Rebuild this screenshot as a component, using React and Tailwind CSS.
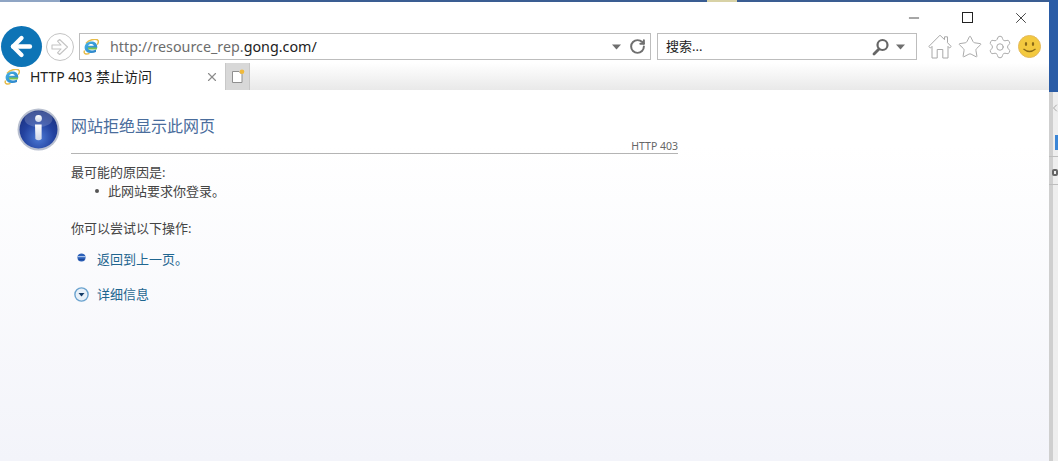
import React from "react";
import { ArrowLeft, RotateCw, Star, Settings, X, Minus, ChevronLeft } from "lucide-react";

const IeLogo = ({ size = 16, id = "ieg" }) => (
  <svg width={size} height={size} viewBox="0 0 16 16" className="shrink-0">
    <defs>
      <linearGradient id={id} x1="0" y1="0" x2="1" y2="1">
        <stop offset="0" stopColor="#45b4e6" />
        <stop offset="1" stopColor="#2b7fc6" />
      </linearGradient>
    </defs>
    <path d="M3 4.5 C6 0.5 12 -0.2 14.4 0.8 C16 1.8 15.4 4 14.2 5.6" fill="none" stroke="#e6bc4a" strokeWidth="1.5" />
    <path d="M1.6 11.5 C0 15 3.5 15.8 6.5 14.4" fill="none" stroke="#e6bc4a" strokeWidth="1.5" />
    <path d="M14.2 9 H5 C5.3 11.4 9.5 12.2 13 10.4 L13 13 C8.5 15.4 1.6 13.8 1.6 8.4 C1.6 3.6 7 1.4 10.8 2.8 C13.4 3.9 14.6 6.4 14.2 9 Z M5.2 6.8 H10.8 C10.5 4.4 5.8 4.3 5.2 6.8 Z" fill={`url(#${id})`} fillRule="evenodd" />
    <path d="M4.8 8.6 H14.2 L13.8 10.4 H5.4 Z" fill="#7cc350" />
  </svg>
);

const Caret = () => (
  <svg width="9" height="6" viewBox="0 0 9 6" className="shrink-0"><path d="M0 0.5 H9 L4.5 5.5 Z" fill="#6f6f6f" /></svg>
);

const InfoIcon = () => (
  <svg width="43" height="43" viewBox="0 0 43 43" className="shrink-0">
    <defs>
      <radialGradient id="inf" cx="0.5" cy="0.72" r="0.75">
        <stop offset="0" stopColor="#4c7ad6" />
        <stop offset="0.55" stopColor="#23429f" />
        <stop offset="1" stopColor="#1a2f7c" />
      </radialGradient>
      <linearGradient id="ib" x1="0" y1="0" x2="0" y2="1">
        <stop offset="0" stopColor="#ffffff" />
        <stop offset="1" stopColor="#cfd6e8" />
      </linearGradient>
    </defs>
    <circle cx="21.5" cy="21.5" r="21" fill="#b9c0d0" />
    <circle cx="21.5" cy="21.5" r="19" fill="url(#inf)" />
    <ellipse cx="21.5" cy="11" rx="14" ry="8" fill="#ffffff" opacity="0.18" />
    <circle cx="21.5" cy="10.5" r="3.4" fill="url(#ib)" />
    <path d="M18 16.5 H24.6 V31 Q21.5 33.5 18.4 31 Z" fill="url(#ib)" />
  </svg>
);

const Smiley = () => (
  <svg width="23" height="23" viewBox="0 0 23 23" className="shrink-0">
    <circle cx="11.5" cy="11.5" r="11" fill="#f3c93f" stroke="#e4b95a" strokeWidth="1" />
    <ellipse cx="8" cy="9" rx="1.2" ry="2" fill="#8a6a18" />
    <ellipse cx="15" cy="9" rx="1.2" ry="2" fill="#8a6a18" />
    <path d="M5.5 14 Q11.5 19 17.5 14" fill="none" stroke="#8a6a18" strokeWidth="1.3" />
  </svg>
);

const House = () => (
  <svg width="24" height="25" viewBox="0 0 24 25" className="shrink-0">
    <path d="M0.8 12.5 L12 1.2 L16.5 5.7 V2.8 H19.5 V8.7 L23.2 12.5 L21.6 14 L20 12.4 V24 H14.8 V15.5 H9.2 V24 H4 V12.4 L2.4 14 Z" fill="#fff" stroke="#a8a8a8" strokeWidth="1" strokeLinejoin="round" />
  </svg>
);

const SearchGlass = () => (
  <svg width="18" height="18" viewBox="0 0 18 18" className="shrink-0">
    <circle cx="10.5" cy="7" r="5" fill="none" stroke="#666" strokeWidth="2.2" />
    <path d="M7 11 L2 16" stroke="#666" strokeWidth="2.8" strokeLinecap="round" />
  </svg>
);

const HollowArrow = () => (
  <svg width="20" height="18" viewBox="0 0 20 18" className="shrink-0">
    <path d="M2 7 H11 L7.5 3.2 L9.6 1.5 L17.5 9 L9.6 16.5 L7.5 14.8 L11 11 H2 Z" fill="#fff" stroke="#c4c4c4" strokeWidth="1.1" strokeLinejoin="round" />
  </svg>
);

const NewTab = () => (
  <svg width="14" height="15" viewBox="0 0 14 15" className="shrink-0">
    <path d="M1.5 2.5 H8 L11 5.5 V13.5 H1.5 Z" fill="#fff" stroke="#8f8f8f" strokeWidth="1" />
    <circle cx="11" cy="2.8" r="2.3" fill="#f0b93a" />
  </svg>
);

const Bullet = () => (
  <svg width="9" height="9" viewBox="0 0 10 10" className="shrink-0 mb-[4px]">
    <circle cx="5" cy="5" r="4.5" fill="#2a5fb8" />
    <path d="M1 4 H9" stroke="#a8c2ea" strokeWidth="1.4" />
    <path d="M2 7.4 H8" stroke="#1b3f8b" strokeWidth="1" />
  </svg>
);

const Expand = () => (
  <svg width="15" height="15" viewBox="0 0 15 15" className="shrink-0">
    <circle cx="7.5" cy="7.5" r="6.6" fill="#e8f0f8" stroke="#6ba3cf" strokeWidth="1.4" />
    <path d="M4.5 6 H10.5 L7.5 9.6 Z" fill="#123a66" />
  </svg>
);

const font = "font-['Segoe_UI','Noto_Sans','Noto_Sans_CJK_SC',sans-serif]";

export default function App() {
  return (
    <div className={`flex w-[1058px] h-[461px] overflow-hidden bg-white ${font}`}>
      <div className="flex flex-col w-[1049px] h-full">
        <div className="flex h-[2px] shrink-0 bg-[#3a5d92]">
          <div className="w-[60px] bg-[#8fa5c4]" />
          <div className="w-[647px]" />
          <div className="w-[30px] bg-[#d8d2a6]" />
        </div>

        <div className="flex justify-end items-center h-[28px] pt-[3px] shrink-0 pr-[19px] text-[#222]">
          <Minus size={16} strokeWidth={1.2} />
          <div className="w-[11px] h-[11px] ml-[40px] border border-[#222]" />
          <X size={18} strokeWidth={1.1} className="ml-[39px]" />
        </div>

        <div className="flex items-center h-[33px] shrink-0 pl-px">
          <div className="relative z-10 flex items-center justify-center w-[41px] h-[41px] rounded-full bg-[#0d74b6] text-white">
            <ArrowLeft size={29} strokeWidth={3.6} />
          </div>
          <div className="flex items-center justify-center w-[28px] h-[28px] ml-[4px] rounded-full border border-[#c4c4c4]">
            <HollowArrow />
          </div>
          <div className="flex items-center w-[572px] h-[27px] ml-[5px] pl-[3px] pr-[4px] border border-[#bdbdbd] bg-white">
            <IeLogo size={16} id="iea" />
            <span className="ml-[11px] pt-px flex-1 text-[14.3px] leading-none text-[#6d6d6d]">
              http://resource_rep.<span className="text-[#222]">gong.com/</span>
            </span>
            <Caret />
            <RotateCw size={17} strokeWidth={2.8} className="ml-[8px] text-[#6f6f6f]" />
          </div>
          <div className="flex items-center w-[260px] h-[27px] ml-[6px] pl-[8px] pr-[11px] border border-[#bdbdbd] bg-white">
            <span className="flex-1 text-[13px] leading-none text-[#222]">搜索...</span>
            <SearchGlass />
            <span className="ml-[6px]"><Caret /></span>
          </div>
          <div className="flex items-center ml-[11px] gap-[7px] text-[#a8a8a8]">
            <div className="flex justify-center w-[23px]"><House /></div>
            <div className="flex justify-center w-[23px]"><Star size={26} strokeWidth={0.9} className="shrink-0" /></div>
            <div className="flex justify-center w-[23px]"><Settings size={26} strokeWidth={0.9} className="shrink-0" /></div>
            <Smiley />
          </div>
        </div>

        <div className="flex h-[27px] shrink-0 bg-gradient-to-b from-white to-[#e9e9e9]">
          <div className="flex items-center w-[225px] pl-[4px] pr-[6px] bg-white">
            <IeLogo size={16} id="ieb" />
            <span className="ml-[10px] flex-1 text-[14px] leading-none text-[#222]">HTTP 403 禁止访问</span>
            <X size={14} strokeWidth={2} className="text-[#8c8c8c]" />
          </div>
          <div className="flex items-center justify-center w-[25px] bg-[#d8d8d8] border-x border-[#c8c8c8]">
            <NewTab />
          </div>
        </div>

        <div className="flex-1 bg-gradient-to-b from-white from-[15%] to-[#f3f4fa] pt-[18px] pl-[17px]">
          <div className="flex items-start">
            <InfoIcon />
            <div className="w-[607px] ml-[11px]">
              <h1 className="pt-[7px] text-[16px] leading-[22px] font-normal text-[#4a6d9c]">网站拒绝显示此网页</h1>
              <div className="mt-[2px] text-right text-[10.5px] leading-[14px] text-[#666] border-b border-[#b4b4b4]">HTTP 403</div>
              <p className="mt-[9px] text-[13px] leading-[18px] text-[#444]">最可能的原因是:</p>
              <div className="flex items-center pl-[24px] text-[13px] leading-[20px] text-[#444]">
                <span className="w-[4px] h-[4px] rounded-full bg-[#555]" />
                <span className="ml-[9px]">此网站要求你登录。</span>
              </div>
              <p className="mt-[18px] text-[13px] leading-[18px] text-[#444]">你可以尝试以下操作:</p>
              <div className="flex items-center mt-[13px] ml-[6px] h-[18px]">
                <Bullet />
                <span className="ml-[11px] text-[13px] leading-none text-[#1f6690]">返回到上一页。</span>
              </div>
              <div className="flex items-center mt-[17px] ml-[3px] h-[18px]">
                <Expand />
                <span className="ml-[8px] text-[13px] leading-none text-[#1f6690]">详细信息</span>
              </div>
            </div>
          </div>
        </div>
      </div>

      <div className="flex flex-col w-[9px] shrink-0 bg-gradient-to-r from-[#cfcfcf] from-40% to-[#eeeeee] to-40%">
        <div className="h-[92px] shrink-0 bg-[#2a5ca6]" />
        <ChevronLeft size={12} strokeWidth={1.4} className="mt-[10px] text-[#8a8a8a]" />
        <div className="self-end w-[3px] h-[15px] mt-[21px] bg-[#3b86d6]" />
        <div className="h-px mt-[6px] bg-[#bdbdbd]" />
        <div className="self-end w-[6px] h-[7px] mt-[12px] border-2 border-[#666] rounded-[2px]" />
        <div className="h-px mt-[8px] bg-[#bdbdbd]" />
      </div>
    </div>
  );
}
